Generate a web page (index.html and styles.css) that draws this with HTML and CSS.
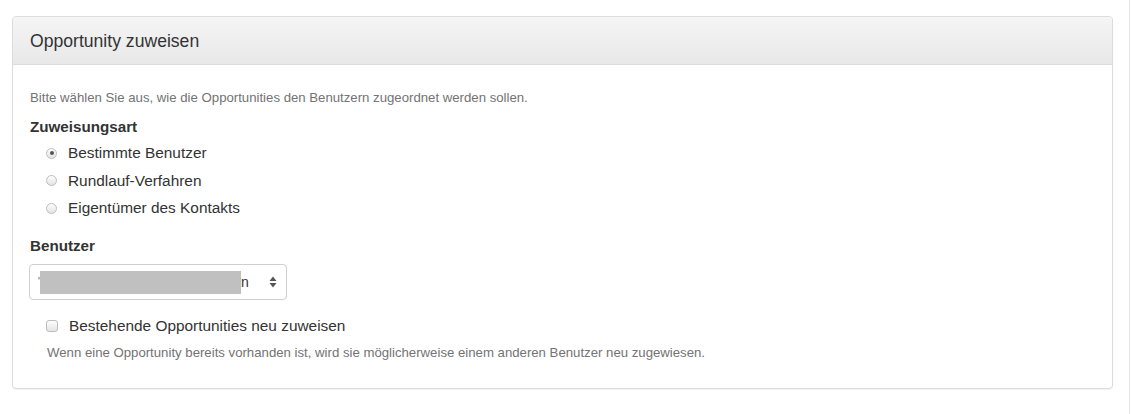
FILE: index.html
```html
<!DOCTYPE html>
<html lang="de">
<head>
<meta charset="utf-8">
<title>Opportunity zuweisen</title>
<link rel="stylesheet" href="styles.css">
</head>
<body>
<div class="page">
  <div class="panel">
    <div class="panel-heading">
      <h3 class="panel-title">Opportunity zuweisen</h3>
    </div>
    <div class="panel-body">
      <p class="intro">Bitte wählen Sie aus, wie die Opportunities den Benutzern zugeordnet werden sollen.</p>
      <div class="group-label">Zuweisungsart</div>
      <div class="radios">
        <label class="option"><span class="radio checked"></span><span>Bestimmte Benutzer</span></label>
        <label class="option"><span class="radio"></span><span>Rundlauf-Verfahren</span></label>
        <label class="option"><span class="radio"></span><span>Eigentümer des Kontakts</span></label>
      </div>
      <div class="group-label users-label">Benutzer</div>
      <div class="select">
        <span class="select-value"><span class="lead">'</span><span class="redact"></span><span class="tail">n</span></span>
        <span class="arrows">
          <svg width="8" height="12" viewBox="0 0 8 12"><path d="M4 0.5 L7.5 5 L0.5 5 Z" fill="#555"/><path d="M4 11.5 L7.5 7 L0.5 7 Z" fill="#555"/></svg>
        </span>
      </div>
      <label class="option check-row"><span class="checkbox"></span><span>Bestehende Opportunities neu zuweisen</span></label>
      <p class="help">Wenn eine Opportunity bereits vorhanden ist, wird sie möglicherweise einem anderen Benutzer neu zugewiesen.</p>
    </div>
  </div>
</div>
</body>
</html>
```

FILE: styles.css
```css
html, body {
  margin: 0;
  padding: 0;
  background: #fff;
  font-family: "Liberation Sans", Arial, Helvetica, sans-serif;
  color: #333;
}

.page {
  width: 1130px;
  height: 414px;
  box-sizing: border-box;
  border-right: 1px solid #e6e6e6;
  padding: 16px 0 0 12px;
}

.panel {
  width: 1101px;
  box-sizing: border-box;
  border: 1px solid #dcdcdc;
  border-radius: 4px;
  background: #fff;
  box-shadow: 0 1px 1px rgba(0, 0, 0, 0.05);
}

.panel-heading {
  height: 47px;
  border-bottom: 1px solid #dcdcdc;
  border-radius: 3px 3px 0 0;
  background: linear-gradient(to bottom, #f5f5f5 0%, #e8e8e8 100%);
  display: flex;
  align-items: center;
  padding: 0 17px;
}

.panel-title {
  margin: 0;
  font-size: 17.6px;
  font-weight: normal;
  color: #333;
  line-height: 20px;
  padding-top: 1px;
}

.panel-body {
  padding: 24px 17px 27px 17px;
}

.intro {
  margin: 0;
  font-size: 13.2px;
  line-height: 17px;
  color: #737373;
}

.group-label {
  margin-top: 11px;
  font-size: 15.2px;
  font-weight: bold;
  line-height: 20px;
  color: #333;
}

.radios {
  margin-top: 6px;
  display: flex;
  flex-direction: column;
  gap: 7.5px;
  padding-left: 16px;
}

.option {
  display: flex;
  align-items: center;
  gap: 11px;
  font-size: 15.4px;
  line-height: 20px;
  color: #333;
}

.radio {
  width: 11px;
  height: 11px;
  box-sizing: border-box;
  border-radius: 50%;
  border: 1px solid #bdbdbd;
  background: linear-gradient(to bottom, #fdfdfd, #e4e4e4);
  position: relative;
  flex: none;
}

.radio.checked::after {
  content: "";
  position: absolute;
  left: 2.5px;
  top: 2.5px;
  width: 4px;
  height: 4px;
  border-radius: 50%;
  background: #555;
}

.users-label {
  margin-top: 18px;
}

.select {
  margin-top: 8px;
  margin-left: -1px;
  width: 258px;
  height: 36px;
  box-sizing: border-box;
  border: 1px solid #cfcfcf;
  border-radius: 4px;
  background: #fff;
  display: flex;
  align-items: center;
  justify-content: space-between;
  padding: 0 9px 0 8px;
}

.select-value {
  display: flex;
  align-items: center;
  font-size: 14px;
  color: #333;
}

.lead {
  color: #555;
  font-size: 10px;
  line-height: 10px;
}

.redact {
  display: inline-block;
  width: 201px;
  height: 23px;
  background: #c0c0c0;
}

.tail {
  font-size: 14px;
  color: #333;
}

.arrows {
  display: flex;
  align-items: center;
}

.check-row {
  margin-top: 16px;
  padding-left: 16px;
}

.checkbox {
  width: 12px;
  height: 12px;
  box-sizing: border-box;
  border: 1px solid #bdbdbd;
  border-radius: 3px;
  background: linear-gradient(to bottom, #fdfdfd, #e4e4e4);
  flex: none;
}

.help {
  margin: 8px 0 0 17px;
  font-size: 13.2px;
  line-height: 17px;
  color: #737373;
}
```
